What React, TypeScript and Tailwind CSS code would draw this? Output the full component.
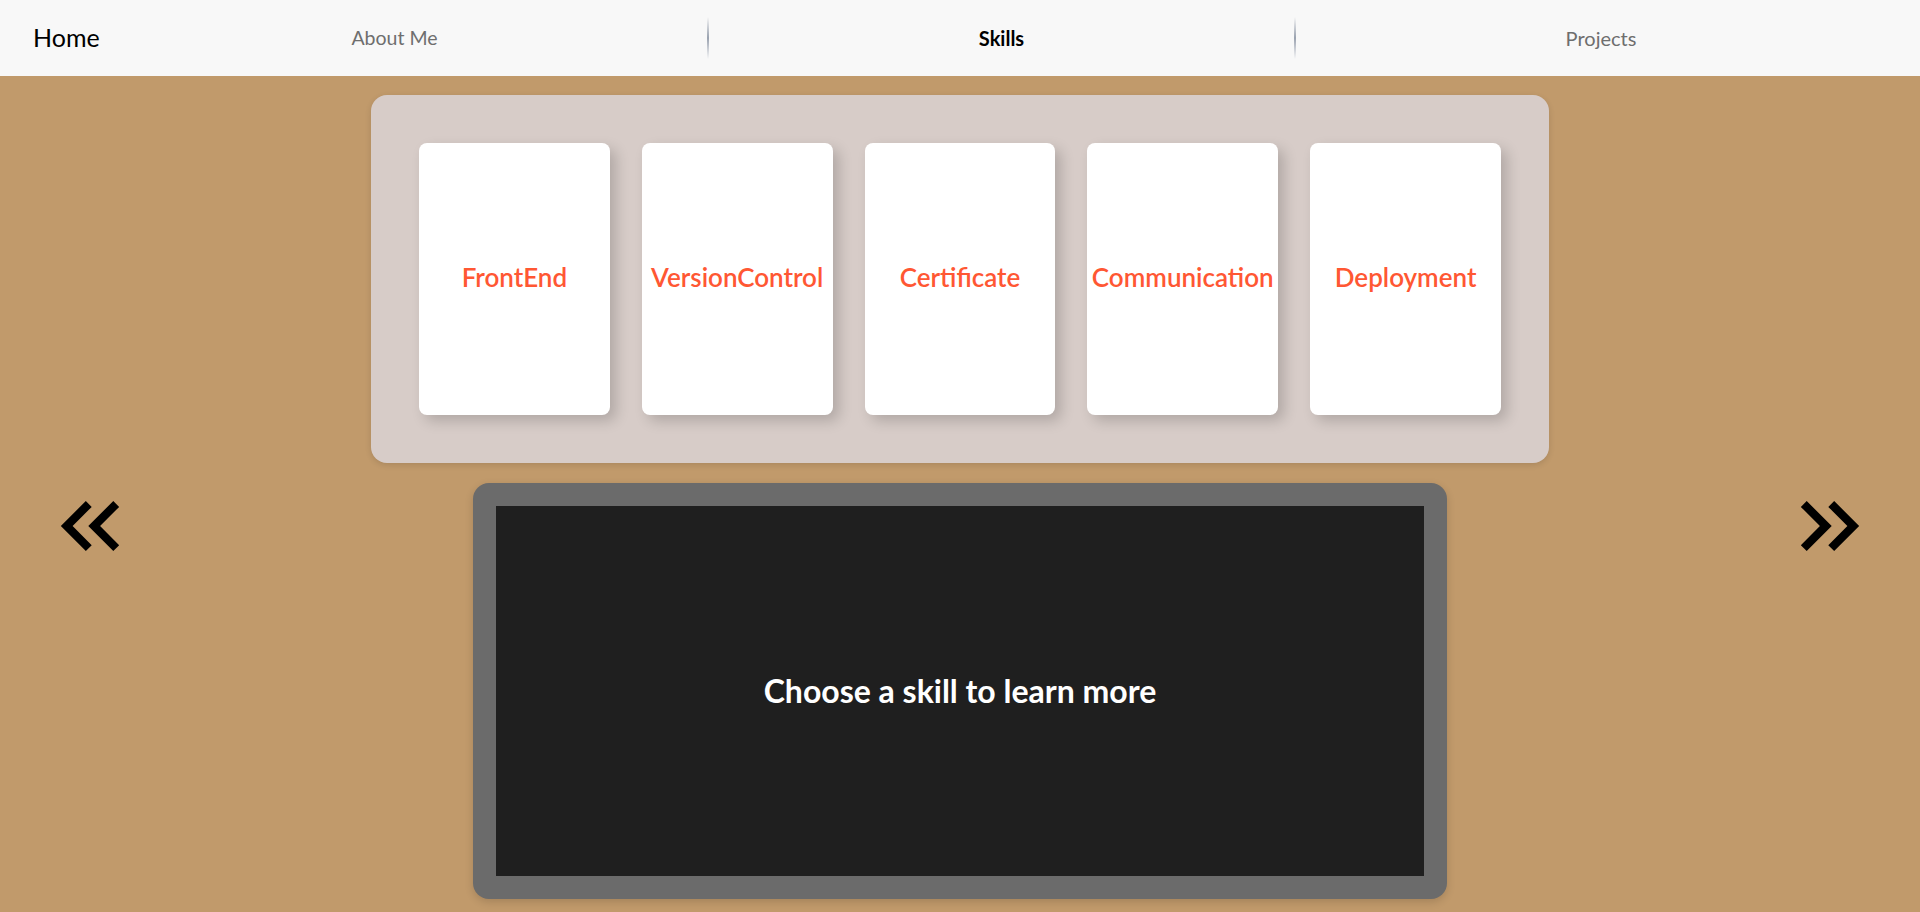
import React from "react";

const skills = ["FrontEnd", "VersionControl", "Certificate", "Communication", "Deployment"];

function DoubleLeft() {
    return (
        <svg viewBox="0 0 24 24" className="w-[100px] h-[100px]" fill="currentColor">
            <path d="M17.59 18 19 16.59 14.42 12 19 7.41 17.59 6l-6 6z" />
            <path d="m11 18 1.41-1.41L7.83 12l4.58-4.59L11 6l-6 6z" />
        </svg>
    );
}

function DoubleRight() {
    return (
        <svg viewBox="0 0 24 24" className="w-[100px] h-[100px]" fill="currentColor">
            <path d="M6.41 6 5 7.41 9.58 12 5 16.59 6.41 18l6-6z" />
            <path d="m13 6-1.41 1.41L16.17 12l-4.58 4.59L13 18l6-6z" />
        </svg>
    );
}

export default function App() {
    return (
        <div className="min-h-screen h-[912px] overflow-hidden bg-[#c19a6b] font-['Lato',sans-serif]">
            {/* navbar */}
            <nav className="h-[76px] bg-[#f8f8f8] flex items-center">
                <div className="w-[100px] pl-[33px] text-[25px] text-black">Home</div>
                <div className="w-[607px] pr-[18px] text-center text-[19.5px] text-[#6e6e6e]">About Me</div>
                <span className="w-[2px] h-[42px] bg-gradient-to-b from-transparent via-gray-400 to-transparent" />
                <div className="w-[585px] text-center text-[20px] font-bold text-black">Skills</div>
                <span className="w-[2px] h-[42px] bg-gradient-to-b from-transparent via-gray-400 to-transparent" />
                <div className="flex-1 pr-[14px] text-center text-[20px] text-[#6e6e6e]">Projects</div>
            </nav>

            {/* skills cards */}
            <div className="flex justify-center mt-[19px]">
                <div className="w-[1178px] bg-[#d7ccc8] rounded-2xl p-12 flex gap-8 shadow-[0_2px_6px_rgba(0,0,0,0.12)]">
                    {skills.map((s) => (
                        <div
                            key={s}
                            className="flex-1 h-[272px] bg-white rounded-lg flex items-center justify-center shadow-[6px_6px_14px_rgba(0,0,0,0.18)]"
                        >
                            <h3 className="text-[26px] leading-none pb-1 font-semibold text-[#ff5733]">{s}</h3>
                        </div>
                    ))}
                </div>
            </div>

            {/* detail */}
            <div className="flex justify-between items-start px-10 mt-[13px]">
                <button className="text-black">
                    <DoubleLeft />
                </button>
                <div className="mt-[7px] w-[974px] h-[416px] bg-[#6b6b6b] rounded-2xl p-[23px] shadow-[0_3px_8px_rgba(0,0,0,0.15)]">
                    <div className="h-full bg-[#1f1f1f] flex items-center justify-center">
                        <h2 className="text-white text-[32px] font-bold">
                            Choose a skill to learn more
                        </h2>
                    </div>
                </div>
                <button className="text-black">
                    <DoubleRight />
                </button>
            </div>
        </div>
    );
}
